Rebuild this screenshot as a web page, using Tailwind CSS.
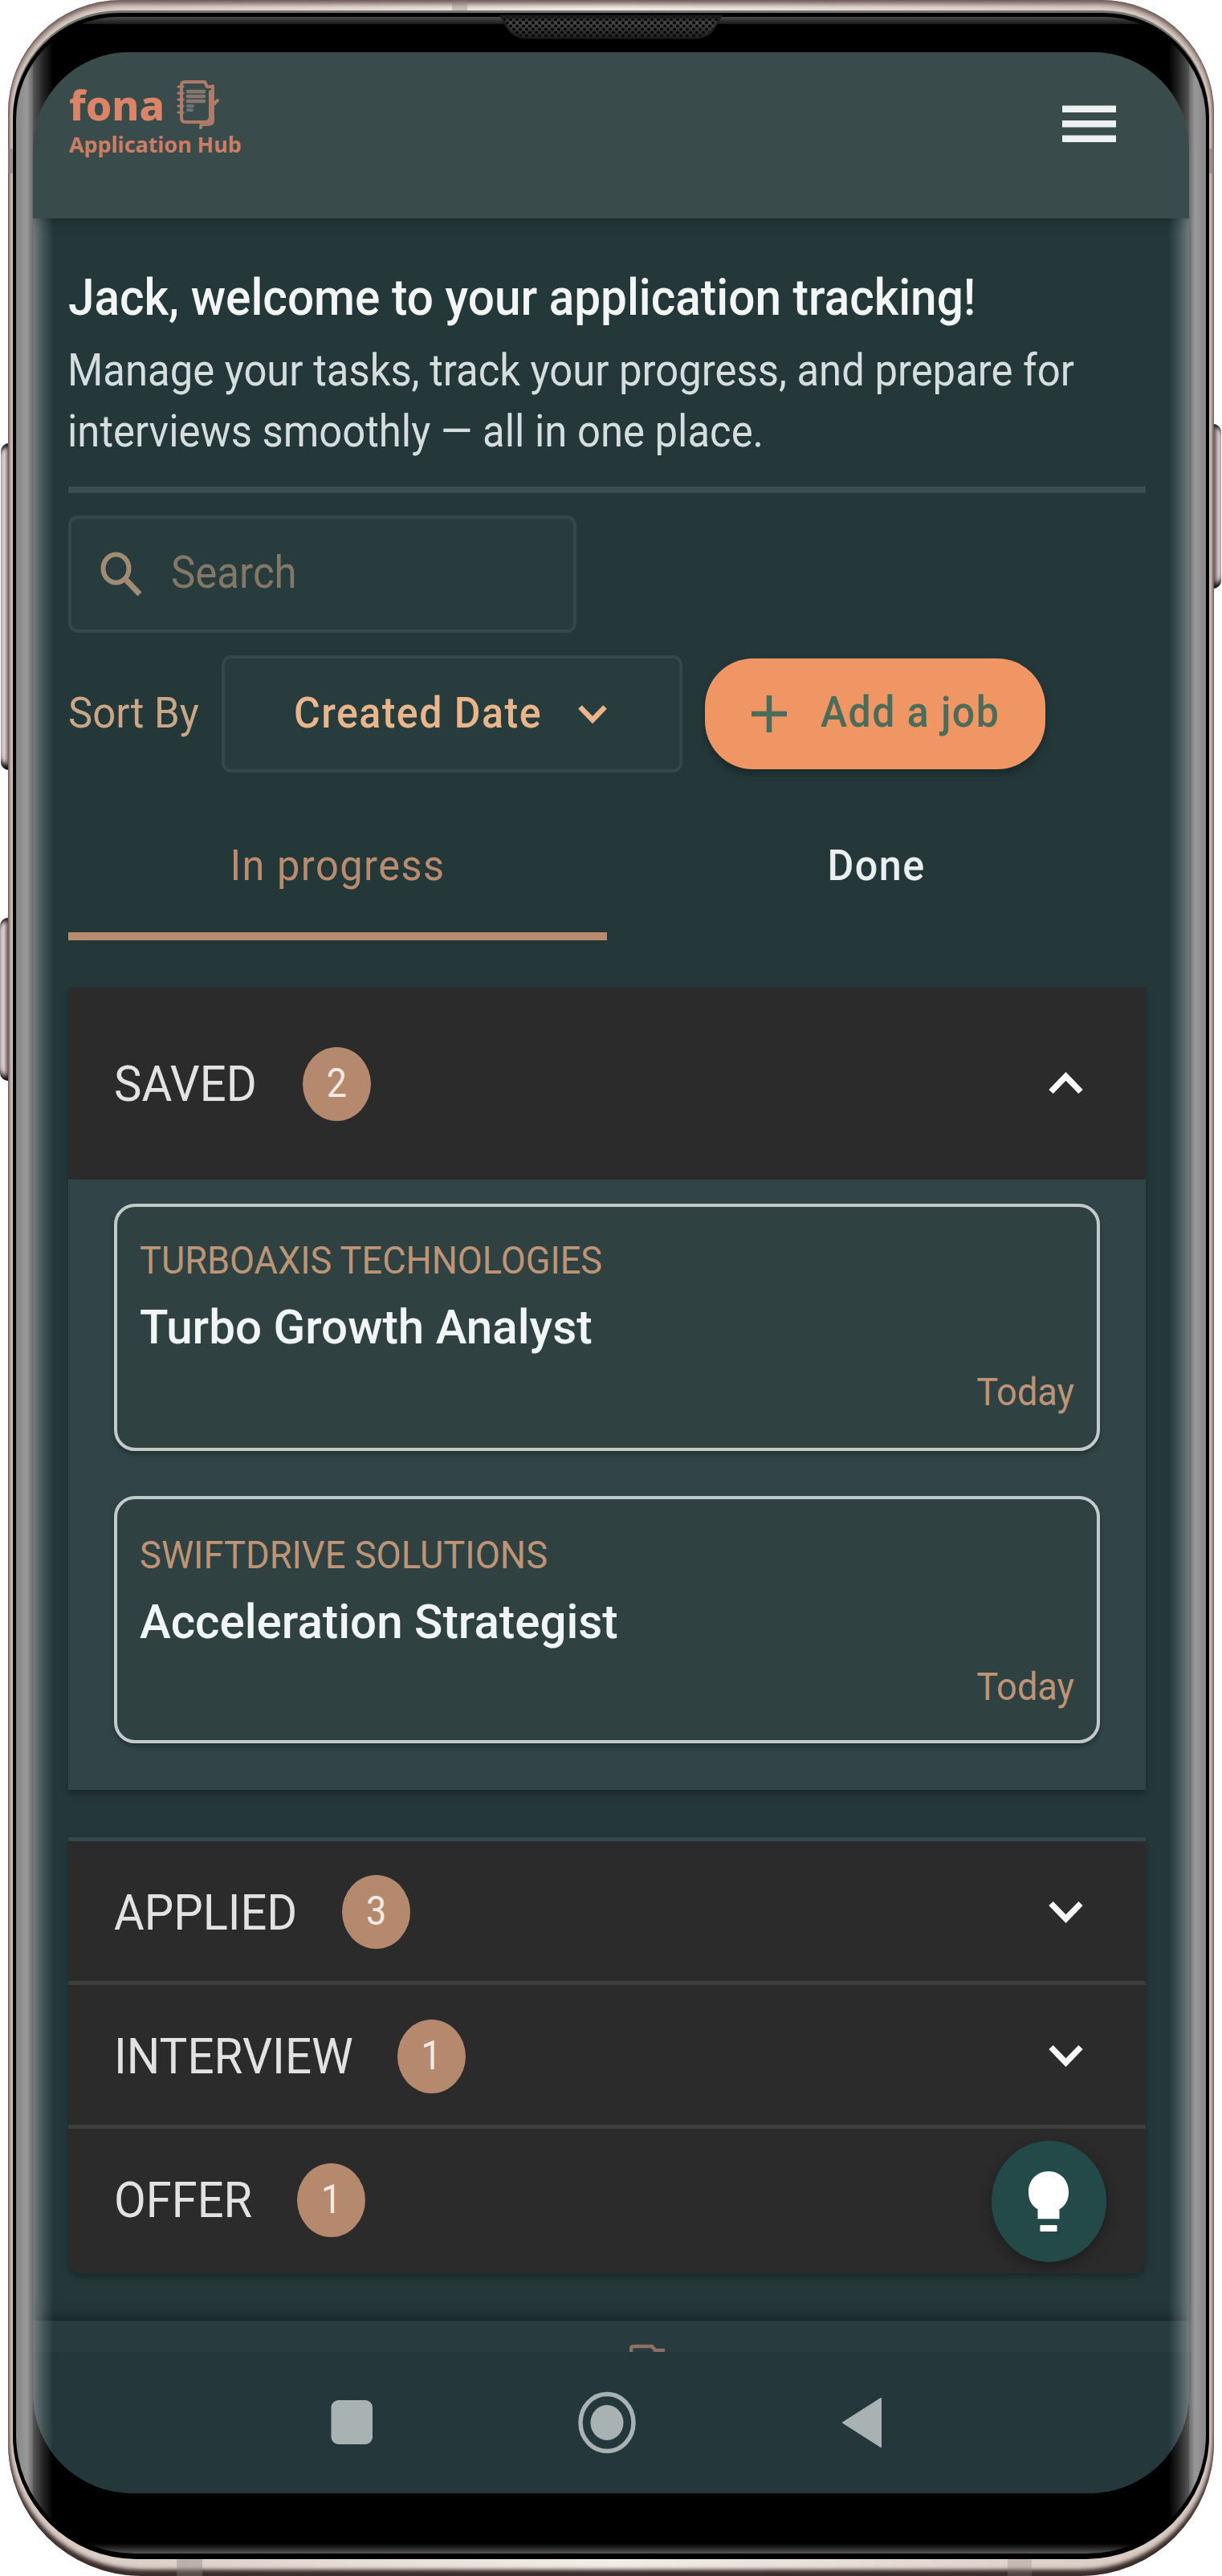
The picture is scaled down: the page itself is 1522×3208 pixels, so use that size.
<!DOCTYPE html>
<html lang="en">
<head>
<meta charset="utf-8">
<title>fona Application Hub</title>
<script src="https://cdn.jsdelivr.net/npm/@tailwindcss/browser@4"></script>
</head>
<body class="bg-white font-['Roboto',sans-serif]">
<div class="relative h-[3208px] w-[1522px] overflow-hidden bg-white">

  <!-- side buttons -->
  <div class="absolute left-px top-[552px] h-[407px] w-[14px] rounded-l-[10px] bg-linear-to-r from-[#d9cdcb] from-35% to-[#4a3539] to-85% shadow-[inset_0_8px_5px_-3px_#222,inset_0_-10px_6px_-3px_#111]"></div>
  <div class="absolute left-0 top-[1143px] h-[203px] w-[14px] rounded-l-[10px] bg-linear-to-r from-[#d9cdcb] from-35% to-[#4a3539] to-85% shadow-[inset_0_7px_5px_-3px_#222,inset_0_-9px_6px_-3px_#111]"></div>
  <div class="absolute left-[1508px] top-[528px] h-[205px] w-[13px] rounded-r-[10px] bg-linear-to-r from-[#4a3539] from-15% to-[#d9cdcb] to-75% shadow-[inset_0_7px_5px_-3px_#222,inset_0_-9px_6px_-3px_#111]"></div>

  <!-- metal rim -->
  <div class="absolute left-[10px] top-0 h-[3208px] w-[1502px] overflow-hidden rounded-t-[140px] rounded-b-[166px] bg-linear-to-r from-[#d5c7bf] via-[#f3ede5] to-[#d5c7bf] shadow-[inset_0_5px_6px_#6f5b58,inset_0_-8px_5px_#3a2d2b,inset_0_0_2px_1px_#9a8a84]">
    <div class="absolute left-[553px] top-0 h-4 w-[19px] bg-[#8a7f79]/35"></div>
    <div class="absolute left-0 top-[185px] h-[31px] w-1.5 bg-[#8a7f79]/60"></div>
    <div class="absolute right-0 top-[185px] h-[31px] w-1.5 bg-[#8a7f79]/60"></div>
    <div class="absolute bottom-0 left-[210px] h-[21px] w-8 bg-[#8a7f79]/40"></div>
    <div class="absolute bottom-0 left-[1245px] h-[21px] w-[30px] bg-[#8a7f79]/30"></div>
  </div>

  <!-- glass bezel -->
  <div class="absolute left-4 top-4 h-[3171px] w-[1490px] rounded-t-[132px] rounded-b-[154px] bg-black shadow-[0_-3px_0_#777571]"></div>
  <div class="absolute left-5 top-[21px] h-[3159px] w-[1482px] overflow-hidden rounded-t-[128px] rounded-b-[148px]">
    <div class="h-[9px] bg-linear-to-b from-[#4a4a4a] to-[#1a1a1a]"></div>
    <div class="absolute inset-x-0 bottom-0 h-4 bg-linear-to-b from-black to-[#575757]"></div>
  </div>

  <!-- earpiece -->
  <svg class="absolute left-[622px] top-[18px]" width="278" height="31" viewBox="0 0 278 31">
    <defs>
      <linearGradient id="ear" x1="0" y1="0" x2="0" y2="1"><stop offset="0" stop-color="#1c1c1c"/><stop offset=".3" stop-color="#464646"/><stop offset="1" stop-color="#222"/></linearGradient>
      <pattern id="mesh" width="8" height="8" patternUnits="userSpaceOnUse"><circle cx="2" cy="2.5" r="2" fill="#050505"/><circle cx="6" cy="6.5" r="2" fill="#050505"/></pattern>
    </defs>
    <path d="M2 2H276C268 18 262 29 244 29H34C16 29 10 18 2 2Z" fill="url(#ear)"/>
    <path d="M2 2H276C268 18 262 29 244 29H34C16 29 10 18 2 2Z" fill="url(#mesh)" stroke="#1e1e1e" stroke-width="2.5"/>
  </svg>

  <!-- screen -->
  <div class="absolute left-[41px] top-[65px] flex h-[3040px] w-[1440px] flex-col overflow-hidden rounded-t-[120px] rounded-b-[124px] bg-[#24383a]">

    <header class="relative z-10 flex h-[207px] shrink-0 items-start justify-between bg-[#394c4b] pl-[45px] pr-[91px] shadow-[0_4px_14px_rgba(0,0,0,0.22)]">
      <div class="pt-[35px] font-['Noto_Sans',sans-serif]">
        <div class="flex h-[64px] items-center gap-[17px]">
          <span class="-mt-[4px] text-[51.8px] leading-[60px] font-extrabold text-[#db8468]">fona</span>
          <svg class="-ml-[3px] -mt-[4px] shrink-0" width="56" height="64" viewBox="0 0 56 64" fill="none" stroke="#ad7b68" stroke-width="4" stroke-linejoin="round" stroke-linecap="round">
            <path d="M36 4H11Q7 4 7 8V49Q7 54 12 54H36Q43 54 43 47V16"/>
            <path d="M36 4L39 10H46V28"/>
            <path d="M46 9V52Q46 57 40 57H33"/>
            <path d="M3 10H9M3 18H9M3 26H9M3 34H9M3 42H9" stroke-width="3"/>
            <path d="M15 16H35M15 22H35M15 28H35" stroke="#86766f" stroke-width="4.5"/>
            <path d="M15 34H21M15 39H20" stroke="#6f7371" stroke-width="4"/>
            <path d="M52 27L46 33V50L42 54L32 55L31 61"/>
          </svg>
        </div>
        <div class="text-[26.9px] leading-[32px] font-bold text-[#cb7d66]">Application Hub</div>
      </div>
      <svg class="mt-[63px]" width="67" height="52" viewBox="0 0 67 52" fill="#eef1f1"><rect x="0" y="3.500" width="67" height="8.500"/><rect x="0" y="22" width="67" height="8.500"/><rect x="0" y="40.500" width="67" height="8.500"/></svg>
    </header>

    <main class="flex h-[2618px] shrink-0 flex-col pl-[44px] pr-[54px] pt-[66px]">
      <h1 class="h-[66px] scale-y-[1.07] whitespace-nowrap text-[58.5px] leading-[66px] font-medium text-[#f4f6f6]">Jack, welcome to your application tracking!</h1>
      <p class="-ml-px mt-[26px] h-[138px] scale-y-[1.09] whitespace-nowrap text-[50.8px] leading-[69px] text-[#d5dddd]">Manage your tasks, track your progress, and prepare for<br>interviews smoothly — all in one place.</p>
      <div class="mt-[38px] h-2 shrink-0 bg-[#3a4d4f]"></div>

      <div class="mt-[28px] flex h-[146px] w-[633px] shrink-0 items-center rounded-xl border-4 border-[#34484a] bg-[#283b3d] pl-[36px]">
        <svg width="52" height="56" viewBox="0 0 52 56" fill="none" stroke="#a18b73" stroke-width="6"><ellipse cx="19.500" cy="21" rx="16" ry="17.500"/><path d="M30 33L49 53" stroke-width="7"/></svg>
        <span class="-mt-[2px] ml-[36px] scale-y-[1.07] text-[51px] leading-[60px] text-[#837868]">Search</span>
      </div>

      <div class="mt-[28px] flex h-[146px] shrink-0 items-center">
        <span class="-mt-[3px] w-[191px] shrink-0 scale-y-[1.07] whitespace-nowrap text-[50.9px] leading-[60px] text-[#c9a685]">Sort By</span>
        <div class="flex h-[146px] w-[574px] shrink-0 items-center rounded-xl border-4 border-[#34484a] bg-[#283b3d] pl-[86px]">
          <span class="-mt-[2px] scale-y-[1.07] whitespace-nowrap text-[50.2px] leading-[60px] font-medium tracking-[0.0286em] text-[#e8b68a]">Created Date</span>
          <svg class="ml-[44px] mt-[2px]" width="38" height="28" viewBox="0 0 38 28" fill="none" stroke="#e8b68a" stroke-width="6.500"><path d="M3.500 4.500L19 20.500L34.500 4.500"/></svg>
        </div>
        <div class="ml-[28px] flex h-[138px] w-[424px] shrink-0 items-center rounded-[60px] bg-[#f09664] pl-[58px] shadow-[0_6px_12px_rgba(0,0,0,0.3)]">
          <svg width="44" height="46" viewBox="0 0 44 46" stroke="#4a6c59" stroke-width="6.500"><path d="M22 0V46M0 23H44"/></svg>
          <span class="ml-[42px] -mt-[4px] scale-y-[1.07] whitespace-nowrap text-[50px] leading-[60px] font-medium tracking-[0.0286em] text-[#4a6c59]">Add a job</span>
        </div>
      </div>

      <div class="mt-[33px] flex h-[176px] shrink-0 text-[50.3px] leading-[60px] font-medium tracking-[0.0286em]">
        <div class="flex w-1/2 items-center justify-center border-b-10 border-[#b98c70] text-[#b98c70]"><span class="scale-y-[1.07] text-[50.6px] font-normal">In progress</span></div>
        <div class="flex w-1/2 items-center justify-center border-b-10 border-transparent text-[#eaeff0]"><span class="scale-y-[1.07]">Done</span></div>
      </div>

      <section class="mt-[58px] shrink-0 bg-[#314548] shadow-[0_5px_8px_rgba(0,0,0,0.3)]">
        <div class="flex h-[240px] items-center bg-[#2a2b2a] pl-[57px] pr-[78px]">
          <span class="mt-px scale-y-[1.04] text-[58px] leading-[70px] text-[#e2e2e2]">SAVED</span>
          <span class="ml-[57px] mt-px flex h-[92px] w-[85px] items-center justify-center rounded-[50%] bg-[#b5896d] text-[45px] text-[#f4e9e3]"><span class="scale-y-[1.09]">2</span></span>
          <svg class="ml-auto" width="43" height="30" viewBox="0 0 43 30" fill="none" stroke="#fff" stroke-width="7.500"><path d="M3 25.500L21.500 6.500L40 25.500"/></svg>
        </div>
        <div class="flex flex-col gap-[56px] pb-[58px] pl-[57px] pr-[57px] pt-[30px]">
          <article class="h-[308px] rounded-[26px] border-[4.500px] border-[#c3caca] bg-[#2f4141] px-[28px] pt-[26px] shadow-[0_4px_6px_rgba(0,0,0,0.3)]">
            <div class="h-[82px] scale-y-[1.05] text-[45.1px] leading-[82px] text-[#bd9475]">TURBOAXIS TECHNOLOGIES</div>
            <div class="h-[82px] scale-y-[1.03] text-[58.3px] leading-[82px] font-medium text-[#f2f5f5]">Turbo Growth Analyst</div>
            <div class="h-[82px] scale-y-[1.05] text-right text-[45.2px] leading-[82px] text-[#bd9475]">Today</div>
          </article>
          <article class="h-[308px] rounded-[26px] border-[4.500px] border-[#c3caca] bg-[#2f4141] px-[28px] pt-[29px] shadow-[0_4px_6px_rgba(0,0,0,0.3)]">
            <div class="h-[82px] scale-y-[1.05] text-[45.3px] leading-[82px] text-[#bd9475]">SWIFTDRIVE SOLUTIONS</div>
            <div class="h-[82px] scale-y-[1.03] text-[58.3px] leading-[82px] font-medium text-[#f2f5f5]">Acceleration Strategist</div>
            <div class="h-[82px] scale-y-[1.05] text-right text-[45.2px] leading-[82px] text-[#bd9475]">Today</div>
          </article>
        </div>
      </section>

      <section class="mt-[59px] shrink-0 overflow-hidden rounded-b-[14px] bg-[#2a2b2a] text-[57.8px] leading-[70px] text-[#e2e2e2] shadow-[0_4px_8px_rgba(0,0,0,0.3)]">
        <div class="flex h-[179px] items-center border-t-5 border-[#33484a] pl-[57px] pr-[78px]">
          <span class="mt-[3px] scale-y-[1.06]">APPLIED</span>
          <span class="ml-[56px] mt-px flex h-[92px] w-[85px] items-center justify-center rounded-[50%] bg-[#b5896d] text-[45px] text-[#f4e9e3]"><span class="scale-y-[1.09]">3</span></span>
          <svg class="ml-auto" width="43" height="30" viewBox="0 0 43 30" fill="none" stroke="#f7f7f7" stroke-width="7.500"><path d="M3 5.500L21.500 24.500L40 5.500"/></svg>
        </div>
        <div class="flex h-[179px] items-center border-t-5 border-[#3d3f3e] pl-[57px] pr-[78px]">
          <span class="mt-[3px] scale-y-[1.06] text-[58.300px]">INTERVIEW</span>
          <span class="ml-[55px] mt-[3px] flex h-[92px] w-[85px] items-center justify-center rounded-[50%] bg-[#b5896d] text-[45px] text-[#f4e9e3]"><span class="scale-y-[1.09]">1</span></span>
          <svg class="ml-auto" width="43" height="30" viewBox="0 0 43 30" fill="none" stroke="#f7f7f7" stroke-width="7.500"><path d="M3 5.500L21.500 24.500L40 5.500"/></svg>
        </div>
        <div class="flex h-[185px] items-center border-t-5 border-[#3d3f3e] pb-[3px] pl-[57px] pr-[78px]">
          <span class="scale-y-[1.06]">OFFER</span>
          <span class="ml-[56px] flex h-[92px] w-[85px] items-center justify-center rounded-[50%] bg-[#b5896d] text-[45px] text-[#f4e9e3]"><span class="scale-y-[1.09]">1</span></span>
        </div>
      </section>
    </main>

    <footer class="h-[39px] shrink-0 overflow-hidden bg-[#283c3f] pl-[743px] pt-[29px] shadow-[0_-4px_16px_rgba(0,0,0,0.35)]">
      <svg width="44" height="10" viewBox="0 0 44 10" fill="none" stroke="#8f7064" stroke-width="4.500"><path d="M2 12V6Q2 3 6 3H28L32 8H42V12"/></svg>
    </footer>

    <nav class="relative h-[176px] shrink-0 bg-[#24383b]">
      <svg class="h-[176px] w-[1440px]" viewBox="41 2929 1440 176" fill="#a8b2b2">
        <rect x="412.500" y="2989" width="51.500" height="55" rx="9"/>
        <ellipse cx="756" cy="3017" rx="33" ry="35.500" fill="none" stroke="#a8b2b2" stroke-width="5.500"/>
        <ellipse cx="756" cy="3017" rx="20.500" ry="22"/>
        <path d="M1050 3017L1097 2987V3047Z" stroke="#a8b2b2" stroke-width="2" stroke-linejoin="round"/>
      </svg>
    </nav>

    <!-- tips button -->
    <div class="absolute left-[1193.500px] top-[2601px] flex h-[151px] w-[143.500px] items-center justify-center rounded-[50%] bg-[#234a48] shadow-[0_6px_16px_rgba(0,0,0,0.35)]">
      <svg width="52" height="77" viewBox="0 0 54 78" preserveAspectRatio="none" fill="#fff"><path d="M27 1C12 1 1 12 1 27C1 37 5 44 13 49V61H41V49C49 44 53 37 53 27C53 12 42 1 27 1Z"/><rect x="16" y="69" width="22" height="8" rx="1"/></svg>
    </div>
  </div>

  <!-- curved glass reflections -->
  <div class="pointer-events-none absolute left-5 top-[21px] h-[3159px] w-[1482px] overflow-hidden rounded-t-[128px] rounded-b-[148px]">
    <div class="absolute inset-y-0 left-0 w-[21px] bg-linear-to-r from-white/53 via-white/60 via-65% to-white/42"></div>
    <div class="absolute inset-y-0 left-[21px] w-[25px] bg-linear-to-r from-white/34 via-white/15 via-50% to-white/0"></div>
    <div class="absolute inset-y-0 right-0 w-[21px] bg-linear-to-l from-white/53 via-white/60 via-65% to-white/42"></div>
    <div class="absolute inset-y-0 right-[21px] w-[25px] bg-linear-to-l from-white/34 via-white/15 via-50% to-white/0"></div>
  </div>
</div>
</body>
</html>
